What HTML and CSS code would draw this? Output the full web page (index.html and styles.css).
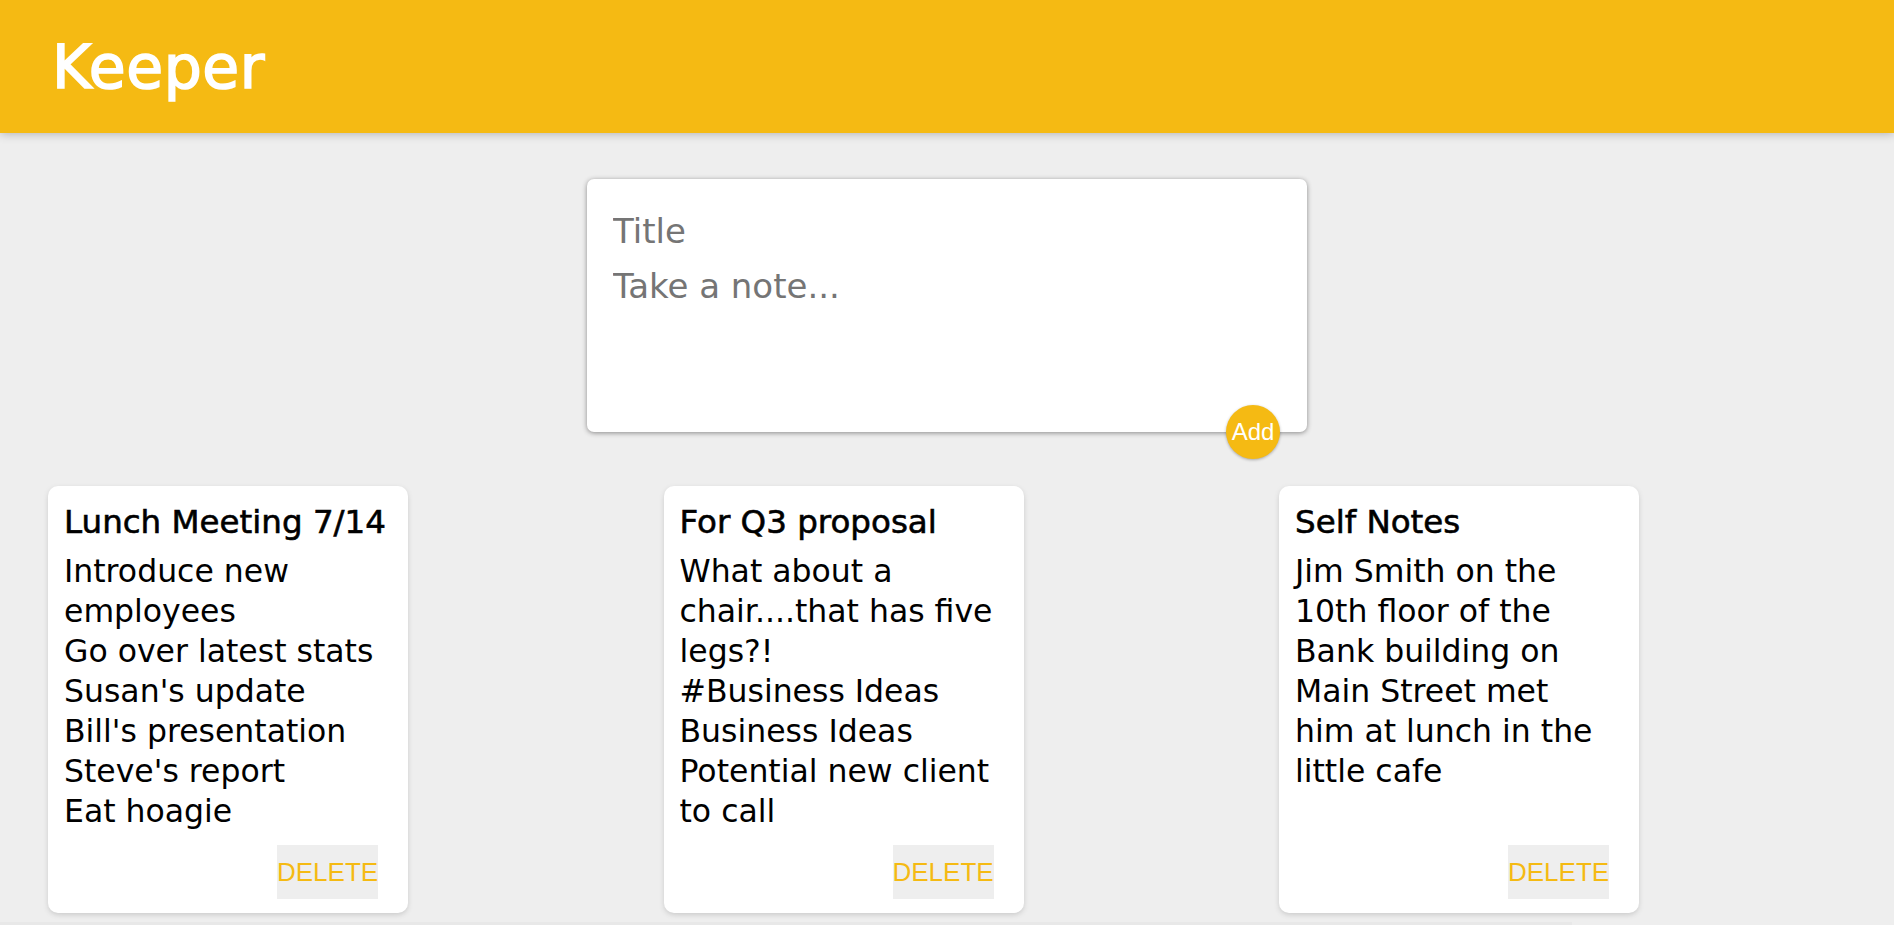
FILE: index.html
```html
<!DOCTYPE html>
<html lang="en">
<head>
<meta charset="utf-8">
<title>Keeper</title>
<link rel="stylesheet" href="styles.css">
</head>
<body>
<header class="header">
  <h1 class="logo">Keeper</h1>
</header>

<main class="main">
  <form class="create-note">
    <input class="create-note__title" name="title" placeholder="Title">
    <textarea class="create-note__content" name="content" placeholder="Take a note..."></textarea>
    <button type="button" class="create-note__add">Add</button>
  </form>

  <section class="notes">
    <article class="note">
      <h2 class="note__title">Lunch Meeting 7/14</h2>
      <p class="note__content">Introduce new employees
Go over latest stats
Susan's update
Bill's presentation
Steve's report
Eat hoagie</p>
      <button type="button" class="note__delete">DELETE</button>
    </article>

    <article class="note">
      <h2 class="note__title">For Q3 proposal</h2>
      <p class="note__content">What about a chair....that has five legs?!
#Business Ideas
Business Ideas
Potential new client to call</p>
      <button type="button" class="note__delete">DELETE</button>
    </article>

    <article class="note">
      <h2 class="note__title">Self Notes</h2>
      <p class="note__content note__content--narrow">Jim Smith on the 10th floor of the Bank building on Main Street met him at lunch in the little cafe</p>
      <button type="button" class="note__delete">DELETE</button>
    </article>
  </section>
</main>
<footer class="footer"></footer>
</body>
</html>
```
FILE: styles.css
```css
* {
  box-sizing: border-box;
}

html, body {
  margin: 0;
  padding: 0;
  background: #eeeeee;
  font-family: "DejaVu Sans", "Noto Sans", sans-serif;
  color: #000;
}

.header {
  background: #f5ba13;
  height: 133px;
  padding: 37px 52px 0;
  box-shadow: 0 0 10px 0 rgba(0, 0, 0, 0.3);
  position: relative;
  z-index: 1;
}

.logo {
  margin: 0;
  color: #fff;
  font-family: "DejaVu Sans", sans-serif;
  font-size: 60px;
  font-weight: normal;
  line-height: 61px;
  letter-spacing: 0.5px;
  -webkit-text-stroke: 1.6px #fff;
}

.main {
  padding-top: 46px;
}

.create-note {
  position: relative;
  width: 720px;
  margin: 0 auto;
  background: #fff;
  border-radius: 7px;
  padding: 22px 26px;
  box-shadow: 0 1px 5px rgb(138, 137, 137);
}

.create-note__title,
.create-note__content {
  display: block;
  width: 100%;
  border: none;
  outline: none;
  background: transparent;
  font-family: "DejaVu Sans", sans-serif;
  font-size: 34px;
  line-height: 40px;
  color: #333;
  resize: none;
  margin: 0;
}

.create-note__title {
  height: 60px;
  padding: 10px 0;
}

.create-note__content {
  height: 149px;
  padding: 5px 0 0;
}

.create-note__title::placeholder,
.create-note__content::placeholder {
  color: #757575;
  opacity: 1;
}

.create-note__add {
  position: absolute;
  right: 27px;
  bottom: -27px;
  width: 54px;
  height: 54px;
  padding: 0;
  border: none;
  border-radius: 50%;
  background: #f5ba13;
  color: #fff;
  font-family: "Liberation Sans", Arial, sans-serif;
  font-size: 24px;
  box-shadow: 0 1px 3px rgba(0, 0, 0, 0.3);
  cursor: pointer;
}

.notes {
  display: grid;
  grid-template-columns: repeat(3, 360px);
  column-gap: 255.5px;
  padding-left: 48px;
  margin-top: 54px;
}

.note {
  display: flex;
  flex-direction: column;
  height: 427px;
  background: #fff;
  border-radius: 10px;
  box-shadow: 0 2px 5px #ccc;
  padding: 16px 16px 14px;
}

.note__title {
  margin: 0 0 9px;
  font-size: 32.5px;
  font-weight: normal;
  line-height: 40px;
  -webkit-text-stroke: 0.6px #000;
  white-space: nowrap;
}

.note__content {
  margin: 0;
  font-size: 31.5px;
  line-height: 40px;
  white-space: pre-line;
}

.note__content--narrow {
  max-width: 310px;
}

.note__delete {
  margin-top: auto;
  margin-right: 14px;
  align-self: flex-end;
  width: 101px;
  height: 54px;
  padding: 0;
  border: none;
  background: #eeeeee;
  color: #f5ba13;
  font-family: "Liberation Sans", Arial, sans-serif;
  font-size: 26px;
  cursor: pointer;
}

.footer {
  width: 1572px;
  height: 40px;
  margin-top: 9px;
  background: #e8e8e8;
}
```
